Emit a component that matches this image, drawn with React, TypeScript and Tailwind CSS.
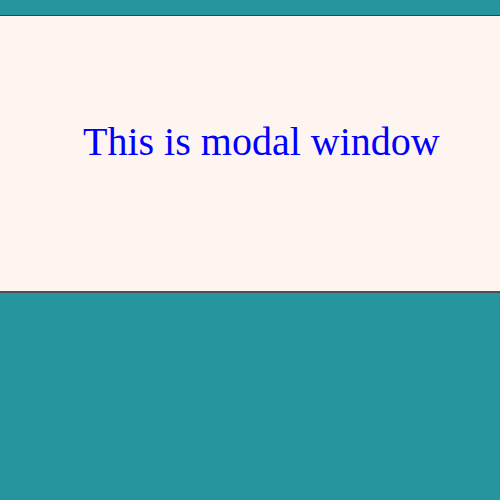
export default function App() {
  return (
    <div className="w-[500px] h-[500px] bg-[#27959d] pt-[15px]">
      <div className="h-[278px] bg-[#fff5f0] border-t border-b-2 border-t-[#404040] border-b-[#505050] pt-[106px] pl-[83px]">
        <p className="text-[40px] text-[#0000ff] font-['Liberation_Serif',serif] leading-none whitespace-nowrap">This is modal window</p>
      </div>
    </div>
  );
}
